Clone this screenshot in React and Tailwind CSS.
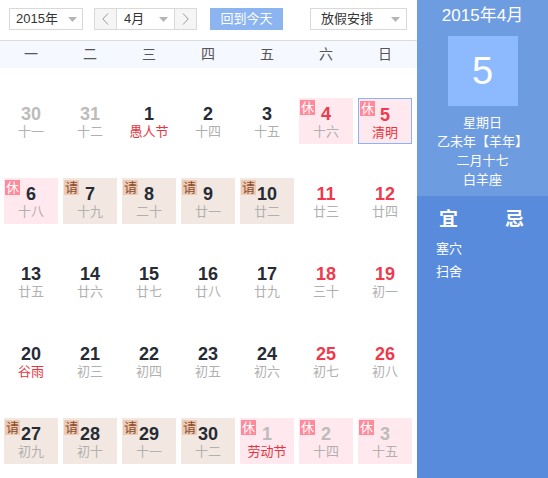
import React from "react";

const weekDays = ["一", "二", "三", "四", "五", "六", "日"];

// d: day, l: lunar, o: other month, w: weekend red number, f: festival (red lunar), b: badge type
const rows = [
  [
    { d: 30, l: "十一", o: true },
    { d: 31, l: "十二", o: true },
    { d: 1, l: "愚人节", f: true },
    { d: 2, l: "十四" },
    { d: 3, l: "十五" },
    { d: 4, l: "十六", w: true, b: "xiu" },
    { d: 5, l: "清明", w: true, f: true, b: "xiu", today: true },
  ],
  [
    { d: 6, l: "十八", b: "xiu" },
    { d: 7, l: "十九", b: "qing" },
    { d: 8, l: "二十", b: "qing" },
    { d: 9, l: "廿一", b: "qing" },
    { d: 10, l: "廿二", b: "qing" },
    { d: 11, l: "廿三", w: true },
    { d: 12, l: "廿四", w: true },
  ],
  [
    { d: 13, l: "廿五" },
    { d: 14, l: "廿六" },
    { d: 15, l: "廿七" },
    { d: 16, l: "廿八" },
    { d: 17, l: "廿九" },
    { d: 18, l: "三十", w: true },
    { d: 19, l: "初一", w: true },
  ],
  [
    { d: 20, l: "谷雨", f: true },
    { d: 21, l: "初三" },
    { d: 22, l: "初四" },
    { d: 23, l: "初五" },
    { d: 24, l: "初六" },
    { d: 25, l: "初七", w: true },
    { d: 26, l: "初八", w: true },
  ],
  [
    { d: 27, l: "初九", b: "qing" },
    { d: 28, l: "初十", b: "qing" },
    { d: 29, l: "十一", b: "qing" },
    { d: 30, l: "十二", b: "qing" },
    { d: 1, l: "劳动节", o: true, f: true, b: "xiu" },
    { d: 2, l: "十四", o: true, b: "xiu" },
    { d: 3, l: "十五", o: true, b: "xiu" },
  ],
];

function Caret() {
  return (
    <svg width="9" height="5" viewBox="0 0 9 5" className="shrink-0">
      <path d="M0 0h9L4.5 5z" fill="#b5b5b5" />
    </svg>
  );
}

function Chevron({ dir }) {
  return (
    <svg width="7" height="12" viewBox="0 0 7 12">
      <path
        d={dir === "left" ? "M6 0.5L0.8 6L6 11.5" : "M1 0.5L6.2 6L1 11.5"}
        fill="none"
        stroke="#9a9a9a"
        strokeWidth="1"
      />
    </svg>
  );
}

function DayCell({ c }) {
  let bg = "";
  if (c.b === "xiu") bg = "bg-[#ffe8ee]";
  if (c.b === "qing") bg = "bg-[#f2e8e1]";
  let numColor = "text-[#262b36]";
  if (c.w) numColor = "text-[#ee3a4c]";
  if (c.o) numColor = "text-[#bcbcbc]";
  const lunarColor = c.f ? "text-[#e8343e]" : "text-[#b0b0b0]";
  return (
    <div
      className={`relative h-[46px] w-[54px] pt-[6px] text-center ${bg} ${
        c.today ? "border border-[#8ab4f8] pt-[5px]" : ""
      }`}
    >
      {c.b === "xiu" && (
        <span className="absolute left-[1px] top-[2px] h-[15px] w-[15px] bg-[#ff8a9b] text-[13px] leading-[15px] text-white">
          休
        </span>
      )}
      {c.b === "qing" && (
        <span className="absolute left-[1px] top-[2px] h-[15px] w-[15px] bg-[#ebcbb6] text-[13px] leading-[15px] text-[#8a4a2a]">
          请
        </span>
      )}
      <div className={`text-[18px] font-bold leading-[20px] ${numColor}`}>{c.d}</div>
      <div className={`text-[13px] leading-[16px] ${lunarColor}`}>{c.l}</div>
    </div>
  );
}

export default function App() {
  return (
    <div
      className="flex h-[478px] w-[548px] overflow-hidden bg-white"
      style={{ fontFamily: '"Liberation Sans", "Noto Sans CJK SC", sans-serif' }}
    >
      <div className="w-[417px] shrink-0">
        <div className="flex h-[41px] items-start border-b border-[#dddddd] pt-[8px] text-[13px] text-[#333]">
          <div className="ml-[9px] flex h-[22px] w-[74px] items-center justify-between border border-[#d9d9d9] pl-[6px] pr-[5px]">
            <span>2015年</span>
            <Caret />
          </div>
          <div className="ml-[11px] flex h-[22px] border border-[#d9d9d9]">
            <div className="flex w-[22px] items-center justify-center border-r border-[#d9d9d9] bg-[#f5f5f5]">
              <Chevron dir="left" />
            </div>
            <div className="flex w-[57px] items-center justify-between pl-[7px] pr-[6px]">
              <span>4月</span>
              <Caret />
            </div>
            <div className="flex w-[22px] items-center justify-center border-l border-[#d9d9d9] bg-[#f5f5f5]">
              <Chevron dir="right" />
            </div>
          </div>
          <div className="ml-[13px] flex h-[22px] w-[73px] items-center justify-center bg-[#8cb4f0] text-white">
            回到今天
          </div>
          <div className="ml-[27px] flex h-[22px] w-[97px] items-center justify-between border border-[#d9d9d9] pl-[10px] pr-[6px]">
            <span>放假安排</span>
            <Caret />
          </div>
        </div>
        <div className="grid h-[27px] grid-cols-[repeat(7,54px)] gap-x-[5px] bg-[#f5f8fe] pl-[4px] text-[14px] leading-[27px] text-[#555]">
          {weekDays.map((w) => (
            <div key={w} className="text-center">
              {w}
            </div>
          ))}
        </div>
        <div className="pl-[4px]">
          {rows.map((r, i) => (
            <div key={i} className="grid h-[80px] grid-cols-[repeat(7,54px)] gap-x-[5px] pt-[30px]">
              {r.map((c, j) => (
                <DayCell key={j} c={c} />
              ))}
            </div>
          ))}
        </div>
      </div>
      <div className="flex w-[131px] flex-col text-white">
        <div className="flex h-[196px] flex-col items-center bg-[#6e9ce0]">
          <div className="mt-[6px] text-[17px] leading-[20px]">2015年4月</div>
          <div className="mt-[10px] flex h-[70px] w-[70px] items-center justify-center bg-[#8dbaff] text-[38px] leading-none">
            5
          </div>
          <div className="mt-[7px] text-center text-[13px] leading-[19px]">
            <div>星期日</div>
            <div>乙未年【羊年】</div>
            <div>二月十七</div>
            <div>白羊座</div>
          </div>
        </div>
        <div className="flex flex-1 bg-[#588bdb] pt-[12px]">
          <div className="ml-[22px] flex flex-col">
            <div className="w-[18px] text-[19px] font-bold leading-[24px]">宜</div>
            <div className="-ml-[3px] mt-[5px] text-[13px] leading-[23px]">
              <div>塞穴</div>
              <div>扫舍</div>
            </div>
          </div>
          <div className="ml-[43px] text-[19px] font-bold leading-[24px]">忌</div>
        </div>
      </div>
    </div>
  );
}
